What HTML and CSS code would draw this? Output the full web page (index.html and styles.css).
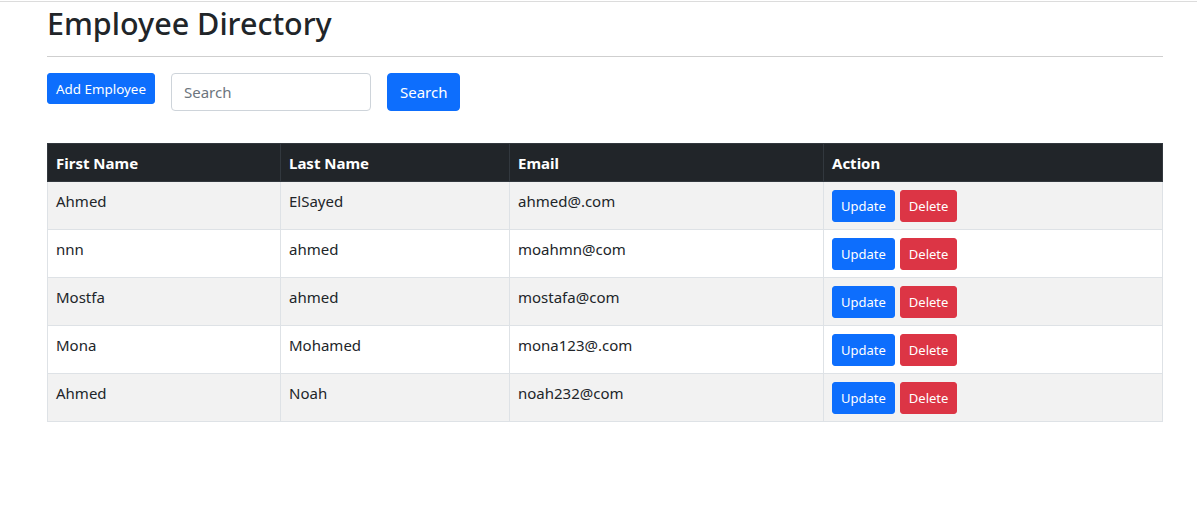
FILE: index.html
```html
<!DOCTYPE html>
<html>
<head>
<meta charset="utf-8">
<link rel="stylesheet" href="styles.css">
</head>
<body>
<div class="topline"></div>
<div class="container">
  <h2 class="title">Employee Directory</h2>
  <hr class="rule">
  <div class="toolbar">
    <button class="btn btn-primary btn-sm">Add Employee</button>
    <input class="search" type="text" placeholder="Search">
    <button class="btn btn-primary">Search</button>
  </div>
  <table class="table">
    <thead>
      <tr><th class="c1">First Name</th><th class="c2">Last Name</th><th class="c3">Email</th><th>Action</th></tr>
    </thead>
    <tbody>
      <tr><td>Ahmed</td><td>ElSayed</td><td>ahmed@.com</td><td><div class="acts"><button class="btn btn-primary btn-xs">Update</button><button class="btn btn-danger btn-xs">Delete</button></div></td></tr>
      <tr><td>nnn</td><td>ahmed</td><td>moahmn@com</td><td><div class="acts"><button class="btn btn-primary btn-xs">Update</button><button class="btn btn-danger btn-xs">Delete</button></div></td></tr>
      <tr><td>Mostfa</td><td>ahmed</td><td>mostafa@com</td><td><div class="acts"><button class="btn btn-primary btn-xs">Update</button><button class="btn btn-danger btn-xs">Delete</button></div></td></tr>
      <tr><td>Mona</td><td>Mohamed</td><td>mona123@.com</td><td><div class="acts"><button class="btn btn-primary btn-xs">Update</button><button class="btn btn-danger btn-xs">Delete</button></div></td></tr>
      <tr><td>Ahmed</td><td>Noah</td><td>noah232@com</td><td><div class="acts"><button class="btn btn-primary btn-xs">Update</button><button class="btn btn-danger btn-xs">Delete</button></div></td></tr>
    </tbody>
  </table>
</div>
</body>
</html>
```
FILE: styles.css
```css
* { box-sizing: border-box; }
body {
  margin: 0;
  font-family: "Noto Sans", "Open Sans", sans-serif;
  font-size: 16px;
  color: #212529;
  background: #fff;
}
.topline {
  margin-top: 1px;
  height: 1px;
  background: #dcdcdc;
}
.container {
  width: 1116px;
  margin-left: 47px;
}
.title {
  margin: 0;
  font-size: 30.5px;
  font-weight: 500;
  line-height: 42px;
  height: 42px;
}
.rule {
  margin: 12px 0 16px;
  border: 0;
  border-top: 1px solid #cfcfcf;
}
.toolbar {
  display: flex;
  align-items: flex-start;
  gap: 16px;
}
.btn {
  font-family: inherit;
  border: 1px solid transparent;
  border-radius: 4px;
  color: #fff;
  font-size: 15px;
  height: 38px;
  padding: 0 12px;
  cursor: pointer;
}
.btn-primary { background: #0d6efd; border-color: #0d6efd; }
.btn-danger { background: #dc3545; border-color: #dc3545; }
.btn-sm {
  height: 31px;
  font-size: 13.4px;
  padding: 0 8px;
  border-radius: 3px;
}
.btn-xs {
  height: 32px;
  font-size: 13px;
  padding: 0 8px;
  border-radius: 3px;
}
.search {
  font-family: inherit;
  width: 200px;
  height: 38px;
  border: 1px solid #ced4da;
  border-radius: 4px;
  padding: 0 12px;
  font-size: 15px;
  color: #212529;
}
.search::placeholder { color: #6c757d; }
.table {
  margin-top: 32px;
  width: 100%;
  border-collapse: collapse;
}
.table th, .table td {
  text-align: left;
  border: 1px solid #dee2e6;
  padding: 0 8px;
  vertical-align: middle;
}
.table th {
  background: #212529;
  color: #fff;
  border-color: #32383e;
  font-weight: 700;
  font-size: 15px;
  height: 38px;
}
.table td {
  height: 48px;
  font-size: 15px;
  padding-top: 0;
  padding-bottom: 10px;
}
.table td:last-child { padding-top: 7px; padding-bottom: 7px; }
.table tbody tr:nth-child(odd) td { background: #f2f2f2; }
.c1 { width: 233px; }
.c2 { width: 229px; }
.c3 { width: 314px; }
.acts {
  display: flex;
  gap: 5px;
}
```
